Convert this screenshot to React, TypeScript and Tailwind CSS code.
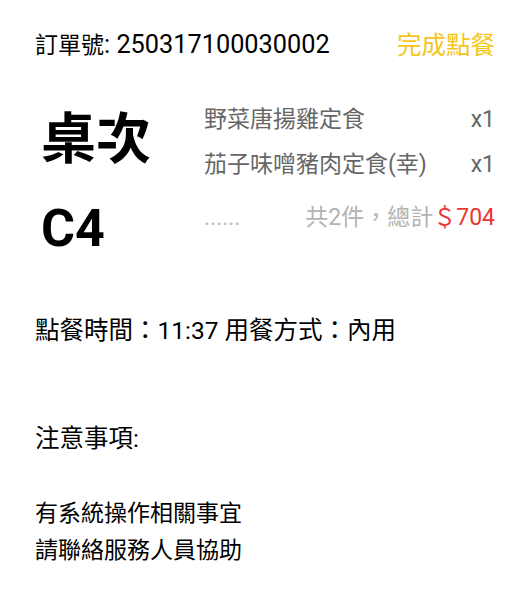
import React from 'react';

const items = [
  { name: '野菜唐揚雞定食', qty: 1 },
  { name: '茄子味噌豬肉定食(幸)', qty: 1 },
];

// 中文字略小於英數字
function Cjk({ children }: { children: React.ReactNode }) {
  return <span className="text-[23px]">{children}</span>;
}

export default function App() {
  const font = { fontFamily: 'Roboto, "Noto Sans CJK TC", sans-serif' };
  return (
    <div className="w-[525px] h-[600px] bg-white text-black pl-[35px] pr-[30px]" style={font}>
      {/* 標題列 */}
      <div className="flex items-center justify-between pt-[29px] text-[25.3px] leading-[32px]">
        <span>
          <Cjk>訂單號</Cjk>: 250317100030002
        </span>
        <span className="text-[24.5px] text-[#f5c518]">完成點餐</span>
      </div>

      {/* 桌次與品項 */}
      <div className="flex mt-[35px]">
        <div className="w-[169px] shrink-0 pl-[6px] font-bold leading-[88px]">
          <div className="text-[55px] -mt-[2px] mb-[2px]">桌次</div>
          <div className="text-[52px]">C4</div>
        </div>
        <div className="flex-1 text-[23px] text-[#666666]">
          {items.map((item) => (
            <div key={item.name} className="flex justify-between leading-[45px]">
              <span>{item.name}</span>
              <span>x{item.qty}</span>
            </div>
          ))}
          <div className="flex justify-between leading-[54px] mt-[4px]">
            <span className="text-[#bbbbbb]">......</span>
            <span className="text-[#b3b3b3]">
              共2件，總計<span className="text-[#ee3333]">＄704</span>
            </span>
          </div>
        </div>
      </div>

      {/* 點餐資訊 */}
      <div className="mt-[42px] text-[24.5px] leading-[32px]">點餐時間：11:37 用餐方式：內用</div>

      <div className="mt-[76px] text-[24.5px] leading-[32px]">注意事項:</div>

      <div className="mt-[40px] text-[23px] leading-[37px]">
        <div>有系統操作相關事宜</div>
        <div>請聯絡服務人員協助</div>
      </div>
    </div>
  );
}
